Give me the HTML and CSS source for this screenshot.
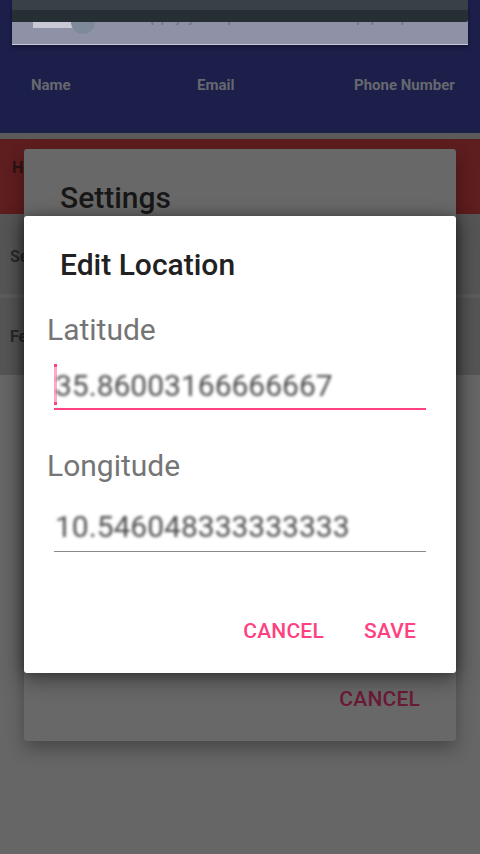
FILE: index.html
```html
<!DOCTYPE html>
<html>
<head>
<meta charset="utf-8">
<link rel="stylesheet" href="styles.css">
</head>
<body>
<div class="screen">
  <div class="hero">
    <div class="card">
      <div class="appbar"><div class="appbar-top"></div><div class="appbar-bottom"></div></div>
      <div class="card-body">
        <span class="thumb"></span>
        <span class="avatar"></span>
        <span class="card-text">supply your problem and help people</span>
      </div>
    </div>
    <div class="cols"><span>Name</span><span>Email</span><span>Phone Number</span></div>
  </div>
  <div class="strip"></div>
  <div class="band"><span class="short">Help</span></div>
  <div class="row row-first"><span class="short">Send</span></div>
  <div class="divider"></div>
  <div class="row row-second"><span class="short">Feed</span></div>
  <div class="rest"></div>
</div>

<div class="dialog settings">
  <div class="dlg-title">Settings</div>
  <div class="settings-actions"><span class="btn btn-dim">CANCEL</span></div>
</div>

<div class="dialog edit">
  <div class="dlg-title">Edit Location</div>
  <div class="label label-lat">Latitude</div>
  <div class="field field-focus">
    <span class="caret"></span>
    <span class="value">35.86003166666667</span>
  </div>
  <div class="label label-lon">Longitude</div>
  <div class="field field-idle">
    <span class="value">10.546048333333333</span>
  </div>
  <div class="actions">
    <span class="btn">CANCEL</span>
    <span class="btn">SAVE</span>
  </div>
</div>
</body>
</html>
```
FILE: styles.css
```css
* { box-sizing: border-box; }
html, body { margin: 0; padding: 0; }
body {
  width: 480px;
  height: 854px;
  overflow: hidden;
  background: #666666;
  font-family: Roboto, "Noto Sans", "Liberation Sans", sans-serif;
  position: relative;
}
.screen { display: flex; flex-direction: column; height: 854px; }

.hero {
  background: #1b1f4a;
  height: 133px;
  padding: 0 12px;
  display: flex;
  flex-direction: column;
}
.card {
  height: 45px;
  background: #8f92a6;
  border-bottom: 1px solid #c9cad6;
  box-shadow: 0 2px 4px rgba(0,0,0,0.35);
  display: flex;
  flex-direction: column;
  overflow: hidden;
}
.appbar { position: relative; z-index: 1; flex: none; }
.appbar-top { height: 10px; background: #3a4048; }
.appbar-bottom { height: 12px; background: #262f33; border-bottom-right-radius: 2px; }
.card-body {
  display: flex;
  align-items: flex-start;
  margin-top: -12px;
  padding-left: 21px;
}
.thumb {
  width: 40px;
  height: 18px;
  background: #c8c9d4;
}
.avatar {
  width: 24px;
  height: 24px;
  border-radius: 50%;
  background: #7e8a9a;
  margin-left: -2px;
}
.card-text {
  margin-left: 36px;
  margin-top: -6px;
  font-size: 18px;
  line-height: 21px;
  color: #72768a;
  white-space: nowrap;
}
.cols {
  margin-top: 30px;
  padding-left: 19px;
  display: grid;
  grid-template-columns: 166px 157px auto;
  font-size: 15px;
  line-height: 20px;
  font-weight: 700;
  color: #67686f;
}

.strip { height: 6px; background: #5a5a5a; }
.short { white-space: nowrap; }
.band {
  height: 75px;
  background: #5e1d1e;
  padding: 19px 0 0 12px;
  font-size: 16px;
  line-height: 20px;
  font-weight: 700;
  color: #2b1212;
}
.row {
  background: #555555;
  padding-left: 10px;
  font-size: 16px;
  line-height: 20px;
  font-weight: 700;
  color: #2a2a2a;
}
.row-first { height: 80px; padding-top: 33px; }
.row-second { height: 77px; padding-top: 29px; }
.divider { height: 4px; background: #5c5c5c; }
.rest { flex: 1; background: #666666; }

.dialog {
  position: absolute;
  left: 24px;
  width: 432px;
  border-radius: 3px;
  display: flex;
  flex-direction: column;
}
.dlg-title {
  font-size: 30px;
  line-height: 36px;
  font-weight: 500;
  padding-left: 36px;
}
.settings {
  top: 149px;
  height: 592px;
  background: #686868;
  box-shadow: 0 8px 18px rgba(0,0,0,0.3);
  padding-top: 31px;
}
.settings .dlg-title { color: #171717; }
.settings-actions {
  margin-top: auto;
  display: flex;
  justify-content: flex-end;
  padding: 0 36px 24px 0;
}
.btn {
  font-size: 21px;
  line-height: 36px;
  font-weight: 500;
  color: #ff4081;
  letter-spacing: 0.2px;
}
.btn-dim { color: #6b1a35; }

.edit {
  top: 216px;
  height: 457px;
  background: #ffffff;
  box-shadow: 0 6px 22px rgba(0,0,0,0.45), 0 0 10px rgba(0,0,0,0.25);
  padding-top: 31px;
}
.edit .dlg-title { color: #212121; }
.label {
  font-size: 30px;
  line-height: 36px;
  color: #757575;
  padding-left: 23px;
}
.label-lat { margin-top: 29px; }
.label-lon { margin-top: 38px; }
.field {
  margin: 0 30px;
  display: flex;
  align-items: center;
  position: relative;
}
.value {
  font-size: 30px;
  line-height: 36px;
  color: #4e4e4e;
  filter: blur(1.4px);
  padding-left: 1px;
}
.field-focus {
  margin-top: 20px;
  padding-bottom: 4px;
  border-bottom: 2px solid #ff4081;
}
.field-idle {
  margin-top: 25px;
  padding-bottom: 6px;
  border-bottom: 1.5px solid #8a8a8a;
}
.caret {
  position: absolute;
  left: 0;
  top: -4px;
  width: 3px;
  height: 41px;
  background: rgba(255,64,129,0.45);
  border-top: 3px solid #ff4081;
  border-bottom: 3px solid #ff4081;
}
.actions {
  margin-top: 61px;
  display: flex;
  justify-content: flex-end;
  gap: 40px;
  padding-right: 40px;
}
```
